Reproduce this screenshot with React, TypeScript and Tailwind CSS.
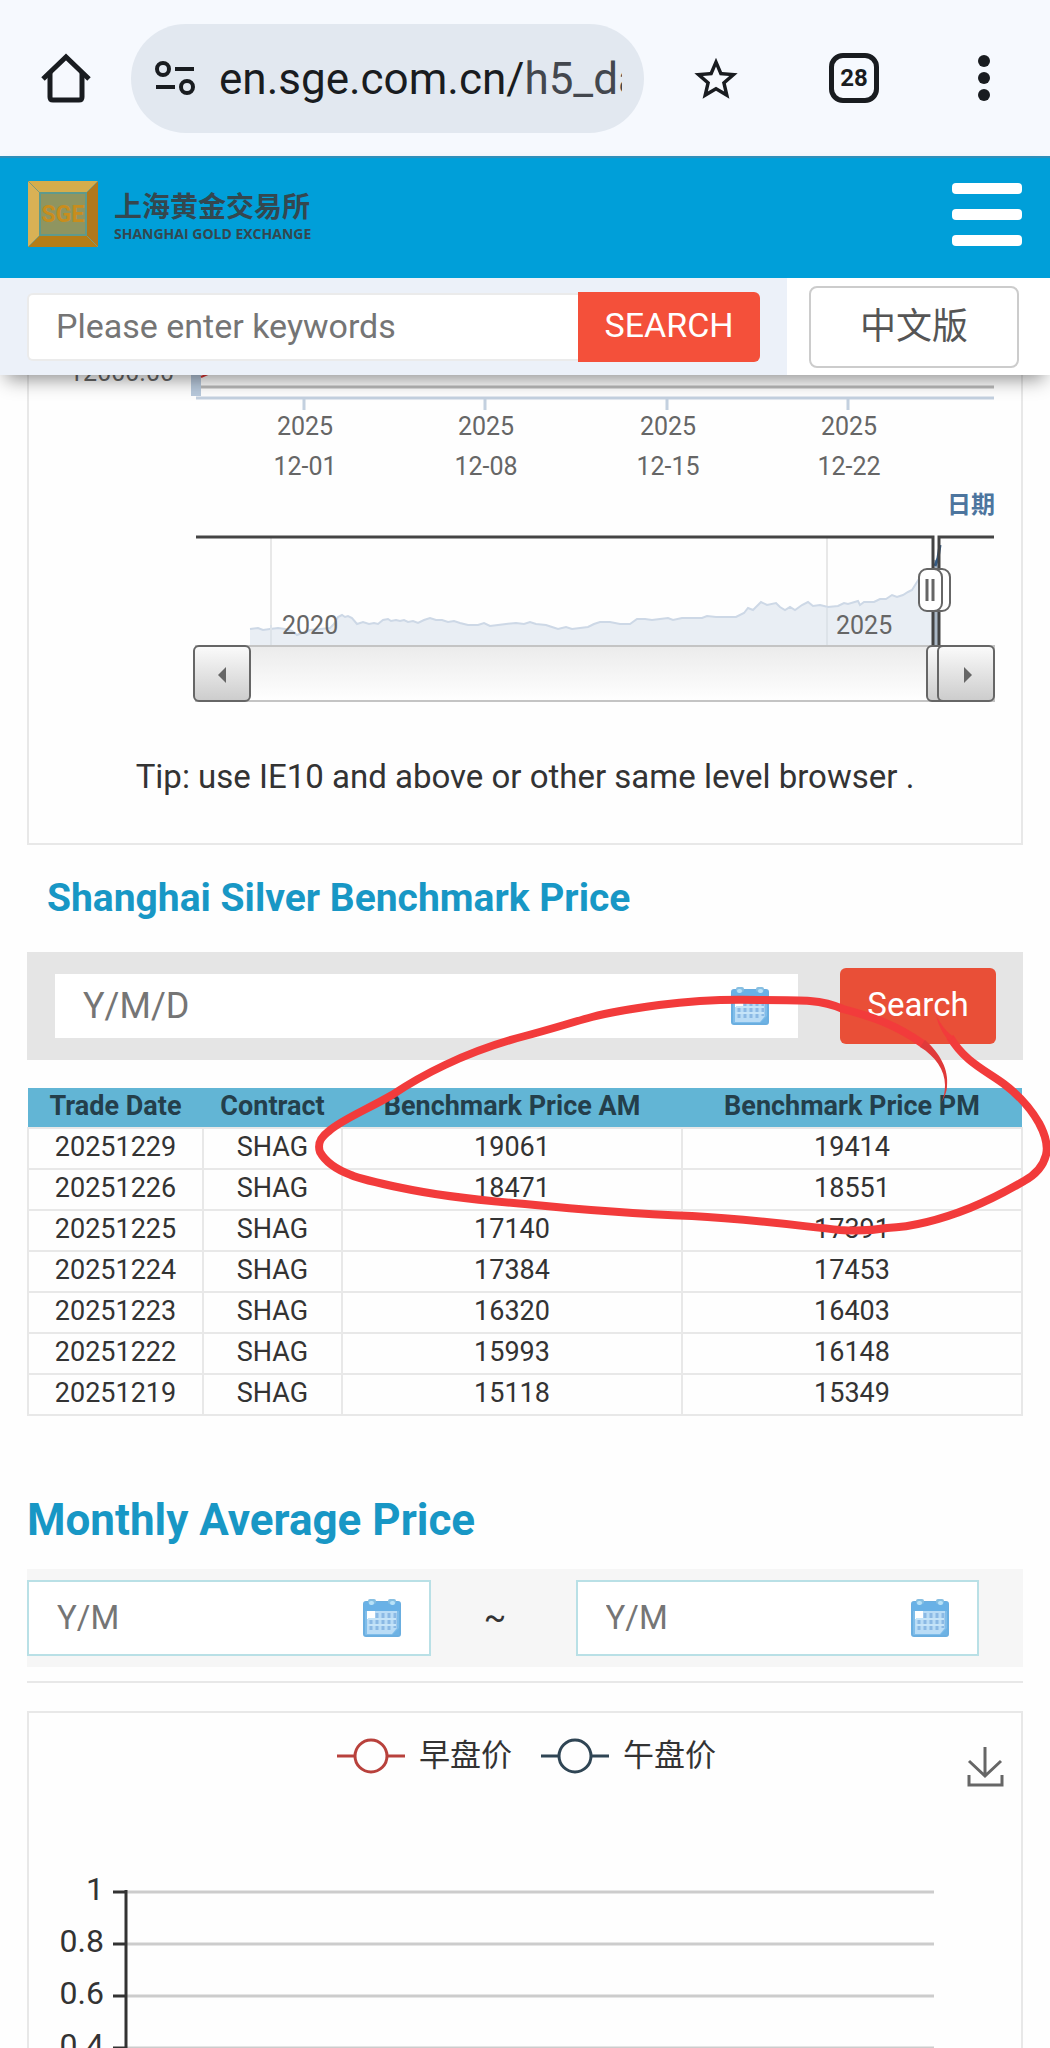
interface PriceRow {
  date: string;
  contract: string;
  am: string;
  pm: string;
}

const rows: PriceRow[] = [
  { date: '20251229', contract: 'SHAG', am: '19061', pm: '19414' },
  { date: '20251226', contract: 'SHAG', am: '18471', pm: '18551' },
  { date: '20251225', contract: 'SHAG', am: '17140', pm: '17391' },
  { date: '20251224', contract: 'SHAG', am: '17384', pm: '17453' },
  { date: '20251223', contract: 'SHAG', am: '16320', pm: '16403' },
  { date: '20251222', contract: 'SHAG', am: '15993', pm: '16148' },
  { date: '20251219', contract: 'SHAG', am: '15118', pm: '15349' },
];

const dateTicks = [
  { x: 304, day: '12-01' },
  { x: 485, day: '12-08' },
  { x: 667, day: '12-15' },
  { x: 848, day: '12-22' },
];

const valueTicks = [
  { y: 1893, label: '1' },
  { y: 1945, label: '0.8' },
  { y: 1997, label: '0.6' },
  { y: 2049, label: '0.4' },
];

// price history shown in the range navigator
const historyPath =
  'M250 629 L258 628 L263 630 L270 629 L278 628 L285 629 L292 631 L297 635 L302 633 L310 630 L320 629 L330 628 L334 624 L338 617 L342 615 L345 617 L348 616 L352 618 L357 624 L363 622 L369 624 L374 623 L378 624 L383 620 L388 619 L391 621 L396 620 L400 621 L404 620 L408 622 L413 621 L418 623 L424 620 L430 618 L436 620 L442 620 L448 622 L454 621 L460 623 L468 625 L478 625 L484 623 L490 626 L498 625 L506 624 L516 623 L524 624 L530 622 L536 624 L546 625 L552 627 L558 629 L566 627 L572 629 L580 628 L588 627 L594 624 L600 622 L610 622 L620 624 L630 624 L637 619 L645 619 L652 620 L660 619 L668 618 L673 620 L682 618 L702 618 L707 616 L716 617 L736 617 L744 613 L748 608 L753 610 L757 606 L761 602 L767 605 L776 603 L780 607 L785 610 L790 607 L795 610 L802 605 L808 602 L813 606 L820 605 L828 607 L838 606 L844 603 L848 604 L858 601 L860 605 L864 602 L874 602 L880 599 L886 599 L892 595 L897 597 L903 595 L908 592 L912 590 L917 582 L922 574 L930 572 L935 566';

function CalendarIcon() {
  return (
    <svg viewBox="0 0 38 38" className="h-[38px] w-[38px]" aria-hidden="true">
      <rect x="1" y="3" width="36" height="34" rx="2" fill="#7fbdea" stroke="#6aaee0" strokeWidth="2" />
      <rect x="1" y="3" width="36" height="9" fill="#69b1e6" />
      <rect x="5" y="0" width="8" height="5" rx="2" fill="#86bfe2" />
      <rect x="25" y="0" width="8" height="5" rx="2" fill="#86bfe2" />
      <rect x="6" y="2" width="5" height="4" rx="2" fill="#b8e2f8" />
      <rect x="27" y="2" width="5" height="4" rx="2" fill="#b8e2f8" />
      <path d="M4 12h30v17l-5 6H4z" fill="#b9dcf6" />
      <rect x="4" y="12" width="8" height="8" fill="#fff" />
      <path d="M14 14v17M20 14v17M26 14v17M32 14v15M8 21v10" stroke="#8bb9e4" strokeWidth="3" />
      <path d="M5 20h28M5 26h28" stroke="#c6e4f8" strokeWidth="2" />
      <path d="M29 36l7-7v7z" fill="#6db2e4" />
    </svg>
  );
}

function BrowserBar() {
  return (
    <div className="flex h-[156px] shrink-0 items-center bg-[#f6f9fe] pr-[60px] pl-10 text-[#191c20]">
      <button aria-label="Home" className="w-[91px]">
        <svg viewBox="0 0 52 52" className="h-[52px] w-[52px]" fill="none" stroke="currentColor" strokeWidth="5">
          <path d="M3 27 L26 5 L49 27" />
          <path d="M10 21 V45 Q10 48 13 48 H39 Q42 48 42 45 V21" />
        </svg>
      </button>
      <div className="flex h-[109px] min-w-0 flex-1 items-center rounded-full bg-[#e2e8f0] px-[22px]">
        <svg viewBox="0 0 44 38" className="mr-[22px] h-[38px] w-[44px] shrink-0" fill="none" stroke="currentColor" strokeWidth="4">
          <circle cx="10" cy="10" r="6" />
          <circle cx="34" cy="28" r="6" />
          <path d="M22 10H41M3 28H22" />
        </svg>
        <span className="overflow-hidden pt-[2px] text-[44px] leading-[60px] whitespace-nowrap">
          en.sge.com.cn/<span className="text-[#43474e]">h5_data</span>
        </span>
      </div>
      <div className="flex items-center pl-[46px]">
        <button aria-label="Bookmark" className="mr-[87px]">
          <svg viewBox="0 1 24 24" className="h-[56px] w-[52px]" fill="currentColor">
            <path d="M22 9.24l-7.19-.62L12 2 9.19 8.63 2 9.24l5.46 4.73L5.82 21 12 17.27 18.18 21l-1.63-7.03L22 9.24zM12 15.4l-3.76 2.27 1-4.28-3.32-2.88 4.38-.38L12 6.1l1.71 4.04 4.38.38-3.32 2.88 1 4.28L12 15.4z" transform="translate(0 1.6)" />
          </svg>
        </button>
        <button className="flex h-[50px] w-[50px] items-center justify-center rounded-[14px] border-[5px] border-[#191c20] text-[24px] font-bold">
          28
        </button>
        <button aria-label="Menu" className="ml-[99px]">
          <svg viewBox="0 0 12 46" className="h-[46px] w-[12px]" fill="currentColor">
            <circle cx="6" cy="6" r="6" />
            <circle cx="6" cy="23" r="6" />
            <circle cx="6" cy="40" r="6" />
          </svg>
        </button>
      </div>
    </div>
  );
}

function SiteHeader() {
  return (
    <header className="relative z-10 shrink-0 shadow-[0_10px_18px_-6px_rgba(0,0,0,0.45)]">
      <div className="flex h-[122px] items-center justify-between border-t-2 border-[#2f8fba] bg-[#009fd9] px-7 pb-2">
        <a href="#" className="flex items-center gap-4 text-[#34474f]">
          <svg viewBox="0 0 70 66" className="h-[66px] w-[70px]" aria-label="SGE">
            <path d="M0 0H70L58 12H12Z" fill="#d5ad4c" />
            <path d="M0 0L12 12V54L0 66Z" fill="#d9b155" />
            <path d="M70 0V66L58 54V12Z" fill="#b1781c" />
            <path d="M0 66L12 54H58L70 66Z" fill="#b57d17" />
            <path d="M0 0L12 12M70 0L58 12M0 66L12 54M70 66L58 54" stroke="#7d9a78" strokeWidth="1" />
            <rect x="12" y="12" width="46" height="42" fill="#8f9560" stroke="#5f9a8c" strokeWidth="2" />
            <text x="35" y="41" textAnchor="middle" fontSize="23" fontWeight="700" fill="#c98d1c">
              SGE
            </text>
          </svg>
          <span className="flex flex-col pt-1">
            <span className="text-[28px] leading-[36px] font-bold">上海黄金交易所</span>
            <span className="font-['Open_Sans'] text-[14px] leading-4 font-bold">SHANGHAI GOLD EXCHANGE</span>
          </span>
        </a>
        <button aria-label="Open menu" className="flex flex-col gap-[15px]">
          <span className="h-[11px] w-[70px] rounded-[4px] bg-white" />
          <span className="h-[11px] w-[70px] rounded-[4px] bg-white" />
          <span className="h-[11px] w-[70px] rounded-[4px] bg-white" />
        </button>
      </div>
      <div className="flex h-[97px] bg-white">
        <form className="flex flex-1 items-center bg-[#ecf1f9] pr-[27px] pl-[27px]">
          <label htmlFor="keywords" className="sr-only">Keywords</label>
          <input
            id="keywords"
            type="text"
            placeholder="Please enter keywords"
            className="h-[68px] min-w-0 flex-1 rounded-l-[6px] border-2 border-r-0 border-[#ebebeb] bg-white pb-[2px] pl-[27px] text-[34px] placeholder:text-[#757575]"
          />
          <button type="button" className="h-[70px] w-[182px] rounded-r-[6px] bg-[#f4503a] pb-[2px] text-[34px] text-white">
            SEARCH
          </button>
        </form>
        <div className="flex w-[263px] items-center pl-[22px]">
          <a href="#" className="flex h-[82px] w-[210px] items-center justify-center rounded-[8px] border-2 border-[#ccc] text-[36px] text-[#555]">
            中文版
          </a>
        </div>
      </div>
    </header>
  );
}

function RangeChart() {
  return (
    <svg viewBox="29 375 992 350" className="block w-full" fontSize="25" fill="#666">
      <defs>
        <linearGradient id="track" x1="0" y1="0" x2="0" y2="1">
          <stop offset="0" stopColor="#ebebeb" />
          <stop offset="1" stopColor="#fff" />
        </linearGradient>
        <linearGradient id="knob" x1="0" y1="0" x2="0" y2="1">
          <stop offset="0" stopColor="#fbfbfb" />
          <stop offset="1" stopColor="#ccc" />
        </linearGradient>
      </defs>

      <text x="174" y="381" textAnchor="end">12000.00</text>
      <rect x="191" y="370" width="10" height="26" fill="#b8c9dc" />
      <path d="M201 377l7 -3" stroke="#d33" strokeWidth="2" />
      <path d="M201 387H994" stroke="#b9b9b9" strokeWidth="3" />
      <path d="M196 398H994" stroke="#c3d0df" strokeWidth="3" />
      {dateTicks.map((tick) => (
        <g key={tick.day} textAnchor="middle">
          <path d={`M${tick.x} 398v12`} stroke="#c3d0df" strokeWidth="3" />
          <text x={tick.x + 1} y="435">2025</text>
          <text x={tick.x + 1} y="475">{tick.day}</text>
        </g>
      ))}
      <text x="995" y="513" textAnchor="end" fontSize="24" fontWeight="700" fill="#4d759e">日期</text>

      <path d="M271 538V646M827 538V646" stroke="#e8e8e8" strokeWidth="2" />
      <path d={`${historyPath} V646 H250 Z`} fill="#e9eef4" />
      <path d={historyPath} fill="none" stroke="#cdd8e6" strokeWidth="2" />
      <path d="M271 625V646M827 608V646" stroke="#dde3e9" strokeWidth="2" />
      <text x="282" y="634">2020</text>
      <text x="836" y="634">2025</text>

      <rect x="933" y="560" width="6" height="86" fill="#a9b6c4" />
      <path d="M935 566L938 558L940 545" fill="none" stroke="#335a84" strokeWidth="3" />
      <path d="M196 537H933V646M994 537H939V646" fill="none" stroke="#444" strokeWidth="3" />

      <rect x="196" y="646" width="798" height="55" fill="url(#track)" stroke="#c4c4c4" strokeWidth="2" />
      <g fill="url(#knob)" stroke="#666" strokeWidth="2">
        <rect x="194" y="646" width="56" height="55" rx="5" />
        <rect x="927" y="646" width="30" height="55" rx="5" />
        <rect x="938" y="646" width="56" height="55" rx="5" />
      </g>
      <path d="M218 675l8 -8v16zM972 675l-8 -8v16z" />
      <g fill="#fff" stroke="#666" strokeWidth="2">
        <rect x="927" y="569" width="23" height="42" rx="8" />
        <rect x="919" y="569" width="23" height="42" rx="8" />
        <path d="M927 579v22M933 579v22" strokeWidth="3" />
      </g>
    </svg>
  );
}

// hand-drawn ring around the latest AM and PM prices
function MarkerRing() {
  return (
    <svg viewBox="0 952 1050 464" className="pointer-events-none absolute inset-x-0 top-0 w-full" fill="none" aria-hidden="true">
      <path
        d="M950 1037 C965 1062 985 1070 1004 1084 C1020 1096 1031 1109 1039 1123 C1047 1138 1048 1147 1046 1155 C1043 1167 1035 1175 1024 1181 C1007 1191 990 1200 970 1208 C940 1220 910 1227 887 1228 C870 1231 855 1231 840 1230 C800 1226 750 1219 692 1216 C640 1214 575 1209 525 1204 C475 1200 435 1195 402 1188 C378 1183 360 1179 351 1175 C335 1169 325 1161 320 1152 C317 1143 321 1137 329 1131 C341 1120 368 1109 392 1095 C410 1083 428 1073 445 1065 C470 1053 498 1043 525 1036 C548 1030 570 1023 592 1017 C615 1011 637 1008 659 1005 C690 1001 725 999 759 1000 C785 1000 800 1000 810 1001 C822 1002 834 1005 843 1009 C870 1016 895 1024 923 1044"
        stroke="#f23b3b"
        strokeWidth="8"
        strokeLinejoin="round"
      />
      <path d="M936 1015 C942 1027 949 1034 954 1037 L949 1041 C943 1034 938 1025 936 1015Z" fill="#f23b3b" />
      <path d="M925 1040 C940 1053 949 1070 947 1086 C947 1092 944 1098 941 1103 C944 1097 945 1091 945 1085 C945 1070 935 1056 920 1047Z" fill="#e03a3a" />
    </svg>
  );
}

function SilverBenchmark() {
  return (
    <section>
      <h2 className="mt-[29px] mb-[30px] pl-[47px] text-[39px] leading-[48px] font-bold text-[#1897c5]">
        Shanghai Silver Benchmark Price
      </h2>
      <div className="relative px-[27px]">
        <form className="flex items-center gap-[42px] bg-[#e5e5e5] py-4 pr-[27px] pl-7">
          <div className="flex h-[64px] min-w-0 flex-1 items-center bg-white pr-[29px]">
            <label htmlFor="trade-date" className="sr-only">Trade date</label>
            <input
              id="trade-date"
              type="text"
              placeholder="Y/M/D"
              className="h-full min-w-0 flex-1 pl-7 text-[36px] placeholder:text-[#757575]"
            />
            <CalendarIcon />
          </div>
          <button type="button" className="h-[76px] w-[156px] rounded-[6px] bg-[#e94f37] pb-[2px] text-[33px] text-white">
            Search
          </button>
        </form>
        <table className="mt-7 w-full table-fixed border-collapse text-center text-[27px] leading-[37px] text-[#333]">
          <thead>
            <tr className="h-10 bg-[#62b5d5] text-[#243f4b]">
              <th className="w-[175px] pb-[2px] font-bold">Trade Date</th>
              <th className="w-[139px] pb-[2px] font-bold">Contract</th>
              <th className="pb-[2px] font-bold">Benchmark Price AM</th>
              <th className="pb-[2px] font-bold">Benchmark Price PM</th>
            </tr>
          </thead>
          <tbody>
            {rows.map((row) => (
              <tr key={row.date} className="h-[41px]">
                <td className="border-2 border-[#e8e8e8] pb-[2px]">{row.date}</td>
                <td className="border-2 border-[#e8e8e8] pb-[2px]">{row.contract}</td>
                <td className="border-2 border-[#e8e8e8] pb-[2px]">{row.am}</td>
                <td className="border-2 border-[#e8e8e8] pb-[2px]">{row.pm}</td>
              </tr>
            ))}
          </tbody>
        </table>
        <MarkerRing />
      </div>
    </section>
  );
}

function MonthInput({ id, label }: { id: string; label: string }) {
  return (
    <div className="flex h-[76px] min-w-0 flex-1 items-center border-2 border-[#b9e0e6] bg-white pr-7">
      <label htmlFor={id} className="sr-only">{label}</label>
      <input
        id={id}
        type="text"
        placeholder="Y/M"
        className="h-full min-w-0 flex-1 pb-[2px] pl-7 text-[33px] placeholder:text-[#757575]"
      />
      <CalendarIcon />
    </div>
  );
}

function AverageChart() {
  return (
    <svg viewBox="29 1714 992 400" className="block w-full" fill="#333">
      <g fill="none" strokeWidth="3">
        <path d="M337 1757H355M387 1757H405" stroke="#b8413c" />
        <circle cx="371" cy="1757" r="16" stroke="#b8413c" />
        <path d="M541 1757H559M591 1757H609" stroke="#2f4554" />
        <circle cx="575" cy="1757" r="16" stroke="#2f4554" />
      </g>
      <text x="419" y="1767" fontSize="31">早盘价</text>
      <text x="623" y="1767" fontSize="31">午盘价</text>
      <path
        d="M985 1748V1777M969 1762L985 1777L1001 1762M969 1776V1786H1002V1776"
        fill="none"
        stroke="#666"
        strokeWidth="3"
      />
      {valueTicks.map((tick) => (
        <g key={tick.label}>
          <path d={`M127 ${tick.y}H934`} stroke="#ccc" strokeWidth="3" />
          <path d={`M113 ${tick.y}H126`} stroke="#333" strokeWidth="3" />
          <text x="104" y={tick.y + 8} textAnchor="end" fontSize="32">{tick.label}</text>
        </g>
      ))}
      <path d="M126 1891V2114" stroke="#333" strokeWidth="3" />
    </svg>
  );
}

function MonthlyAverage() {
  return (
    <section className="px-[27px]">
      <h2 className="mt-[76px] text-[44px] leading-[56px] font-bold text-[#1897c5]">Monthly Average Price</h2>
      <form className="mt-[21px] flex items-center bg-[#f6f6f6] py-[11px] pr-11">
        <MonthInput id="month-from" label="From month" />
        <span className="w-[145px] pr-4 text-center text-[33px] text-[#333]">~</span>
        <MonthInput id="month-to" label="To month" />
      </form>
      <hr className="mt-[14px] mb-7 border-t-2 border-[#e8e8e8]" />
      <div className="border-2 border-[#e8e8e8]">
        <AverageChart />
      </div>
    </section>
  );
}

export default function App() {
  return (
    <div className="flex h-screen flex-col overflow-hidden bg-[#fefefe] font-[Roboto,'Noto_Sans_CJK_SC',sans-serif]">
      <BrowserBar />
      <SiteHeader />
      <main className="min-h-0 flex-1 overflow-hidden">
        <div className="mx-[27px] border-2 border-t-0 border-[#e8e8e8]">
          <RangeChart />
          <p className="pt-8 pb-[46px] text-center text-[33px] leading-10 text-[#333]">
            Tip: use IE10 and above or other same level browser .
          </p>
        </div>
        <SilverBenchmark />
        <MonthlyAverage />
      </main>
    </div>
  );
}
